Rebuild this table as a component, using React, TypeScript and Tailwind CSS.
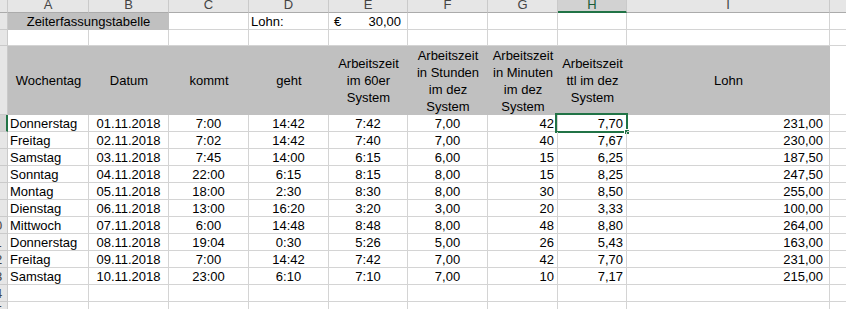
import React from "react";

type Align = "left" | "center" | "right";

// column widths incl. the right gridline (A..I), J takes the rest
const widths = ["w-[81px]", "w-[80px]", "w-[80px]", "w-[80px]", "w-[79px]", "w-[80px]", "w-[70px]", "w-[69px]", "w-[203px]"];
const letters = ["A", "B", "C", "D", "E", "F", "G", "H", "I"];

const headers: string[][] = [
  ["Wochentag"],
  ["Datum"],
  ["kommt"],
  ["geht"],
  ["Arbeitszeit", "im 60er", "System"],
  ["Arbeitszeit", "in Stunden", "im dez", "System"],
  ["Arbeitszeit", "in Minuten", "im dez", "System"],
  ["Arbeitszeit", "ttl im dez", "System"],
  ["Lohn"],
];

const rows: string[][] = [
  ["Donnerstag", "01.11.2018", "7:00", "14:42", "7:42", "7,00", "42", "7,70", "231,00"],
  ["Freitag", "02.11.2018", "7:02", "14:42", "7:40", "7,00", "40", "7,67", "230,00"],
  ["Samstag", "03.11.2018", "7:45", "14:00", "6:15", "6,00", "15", "6,25", "187,50"],
  ["Sonntag", "04.11.2018", "22:00", "6:15", "8:15", "8,00", "15", "8,25", "247,50"],
  ["Montag", "05.11.2018", "18:00", "2:30", "8:30", "8,00", "30", "8,50", "255,00"],
  ["Dienstag", "06.11.2018", "13:00", "16:20", "3:20", "3,00", "20", "3,33", "100,00"],
  ["Mittwoch", "07.11.2018", "6:00", "14:48", "8:48", "8,00", "48", "8,80", "264,00"],
  ["Donnerstag", "08.11.2018", "19:04", "0:30", "5:26", "5,00", "26", "5,43", "163,00"],
  ["Freitag", "09.11.2018", "7:00", "14:42", "7:42", "7,00", "42", "7,70", "231,00"],
  ["Samstag", "10.11.2018", "23:00", "6:10", "7:10", "7,00", "10", "7,17", "215,00"],
];

const align: Align[] = ["left", "center", "center", "center", "center", "center", "right", "right", "right"];
const alignClass: Record<Align, string> = {
  left: "text-left pl-[2px]",
  center: "text-center",
  right: "text-right pr-[3px]",
};

const RowHead = ({ n, active = false, tall = false }: { n: number; active?: boolean; tall?: boolean }) => (
  <div
    className={`w-[8px] shrink-0 overflow-hidden border-b border-[#cacaca] text-[#444] ${
      active ? "bg-[#d2d2d2] border-r-2 border-r-[#217346]" : "bg-[#e6e6e6] border-r"
    } ${tall ? "h-[69px] flex items-center" : "h-[17px]"}`}
  >
    <div className="ml-[-18px] w-[26px] shrink-0 text-center leading-[17px]">{n}</div>
  </div>
);

const Blank = ({ w, h }: { w: string; h: string }) => (
  <div className={`${w} ${h} shrink-0 border-r border-b border-[#d4d4d4]`} />
);

export default function App() {
  return (
    <div className="w-[846px] h-[309px] overflow-hidden bg-white text-[13px] text-black font-['Liberation_Sans',Arial,sans-serif]">
      {/* column letters */}
      <div className="flex h-[13px]">
        <div className="w-[8px] shrink-0 bg-[#e6e6e6] border-r border-b border-r-[#cacaca] border-b-[#ababab]" />
        {letters.map((l, i) =>
          l === "H" ? (
            <div
              key={l}
              className={`${widths[i]} shrink-0 bg-[#d2d2d2] border-r border-r-[#cacaca] border-b-2 border-b-[#217346] text-center leading-[10px] text-[#185c37]`}
            >
              {l}
            </div>
          ) : (
            <div
              key={l}
              className={`${widths[i]} shrink-0 bg-[#e6e6e6] border-r border-b border-r-[#cacaca] border-b-[#ababab] text-center leading-[10px] text-[#444]`}
            >
              {l}
            </div>
          )
        )}
        <div className="flex-1 bg-[#e6e6e6] border-b border-[#ababab]" />
      </div>

      {/* row 1: title + hourly wage */}
      <div className="flex h-[17px]">
        <RowHead n={1} />
        <div className="w-[161px] h-[17px] shrink-0 bg-[#c0c0c0] text-center leading-[17px]">Zeiterfassungstabelle</div>
        <Blank w={widths[2]} h="h-[17px]" />
        <div className={`${widths[3]} h-[17px] shrink-0 border-r border-b border-[#d4d4d4] pl-[2px] leading-[17px]`}>Lohn:</div>
        <div className={`${widths[4]} h-[17px] shrink-0 border-r border-b border-[#d4d4d4] flex justify-between pl-[5px] pr-[6px] leading-[17px]`}>
          <span>€</span>
          <span>30,00</span>
        </div>
        {widths.slice(5).map((w, i) => (
          <Blank key={i} w={w} h="h-[17px]" />
        ))}
        <div className="flex-1 h-[17px] border-b border-[#d4d4d4]" />
      </div>

      {/* row 2: empty */}
      <div className="flex h-[16px]">
        <div className="w-[8px] h-[16px] shrink-0 bg-[#e6e6e6] border-r border-b border-[#cacaca]" />
        {widths.map((w, i) => (
          <Blank key={i} w={w} h="h-[16px]" />
        ))}
        <div className="flex-1 h-[16px] border-b border-[#d4d4d4]" />
      </div>

      {/* row 3: column titles */}
      <div className="flex h-[69px]">
        <RowHead n={3} tall />
        {headers.map((lines, i) => (
          <div
            key={i}
            className={`${widths[i]} h-[69px] shrink-0 bg-[#c0c0c0] flex flex-col items-center justify-center leading-[17px] whitespace-nowrap`}
          >
            {lines.map((t) => (
              <span key={t}>{t}</span>
            ))}
          </div>
        ))}
        <div className="flex-1 h-[69px] border-b border-[#d4d4d4]" />
      </div>

      {/* data rows */}
      {rows.map((r, ri) => (
        <div key={ri} className="flex h-[17px]">
          <RowHead n={ri + 4} active={ri === 0} />
          {r.map((v, ci) => (
            <div
              key={ci}
              className={`${widths[ci]} h-[17px] shrink-0 relative border-r border-b border-[#d4d4d4] leading-[17px] whitespace-nowrap ${
                ci === 8 ? "text-right pr-[6px]" : alignClass[align[ci]]
              }`}
            >
              {v}
              {ri === 0 && ci === 7 && (
                <div className="absolute left-[-3px] top-[-2px] right-[-2px] bottom-[-2px] border-2 border-[#217346]">
                  <div className="absolute right-[-4px] bottom-[-4px] w-[6px] h-[6px] bg-[#217346] border border-white" />
                </div>
              )}
            </div>
          ))}
          <div className="flex-1 h-[17px] border-b border-[#d4d4d4]" />
        </div>
      ))}

      {/* trailing empty rows */}
      {[14, 15].map((n) => (
        <div key={n} className="flex h-[17px]">
          <RowHead n={n} />
          {widths.map((w, i) => (
            <Blank key={i} w={w} h="h-[17px]" />
          ))}
          <div className="flex-1 h-[17px] border-b border-[#d4d4d4]" />
        </div>
      ))}
    </div>
  );
}
